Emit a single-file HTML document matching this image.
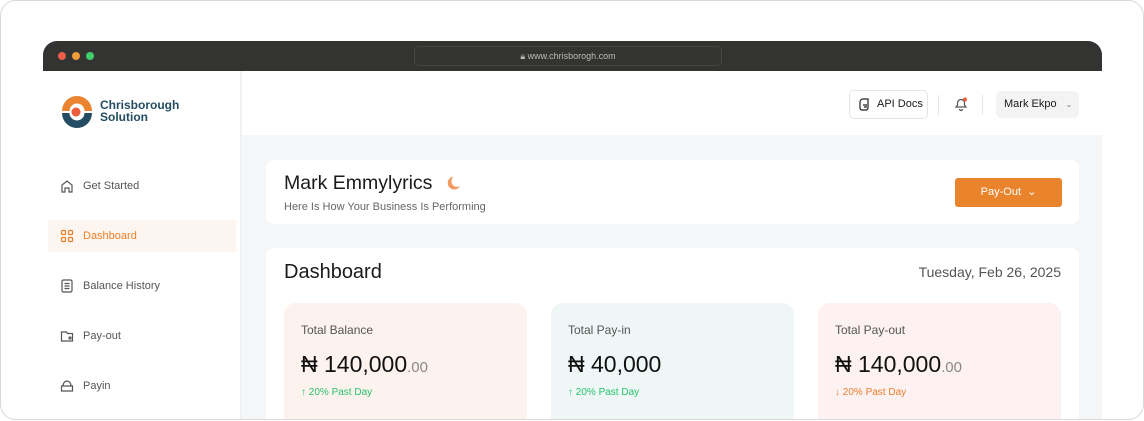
<!DOCTYPE html>
<html><head><meta charset="utf-8"><style>
*{box-sizing:border-box;margin:0;padding:0}
html,body{width:1144px;height:421px;overflow:hidden}
body{background:#fff;font-family:"Liberation Sans",sans-serif;position:relative;color:#1a1a1a}
.outer{position:absolute;left:0;top:0;width:1144px;height:420px;border:1px solid #d9d9d9;border-radius:16px}
.win{position:absolute;left:43px;top:41px;width:1059px;height:378px;border-radius:14px 14px 0 0;overflow:hidden;background:#f5f6f8}
.bar{height:30px;background:#333331;position:relative}
.dot{position:absolute;top:11px;width:8px;height:8px;border-radius:50%}
.url{position:absolute;left:371px;top:5px;width:308px;height:20px;border:1px solid #474745;border-radius:5px;color:#bbb;font-size:9px;text-align:center;line-height:18px}
.side{position:absolute;left:0;top:30px;width:198px;height:360px;background:#fff;border-right:1px solid #eee}
.nav{position:absolute;left:5px;width:188px;height:32px;display:flex;align-items:center;padding-left:12px;font-size:11px;color:#555}
.nav svg{margin-right:9px}
.head{position:absolute;left:199px;top:30px;right:0;height:64px;background:#fff}
.card{position:absolute;background:#fff;border-radius:8px}
.stat{position:absolute;top:262px;width:243px;height:140px;border-radius:12px;padding:20px 17px}
.stat .t{font-size:12px;color:#555}
.stat .v{font-size:23px;margin-top:14px;color:#111}
.stat .v small{font-size:15px;color:#888}
.stat .p{font-size:10px;margin-top:9px}
</style></head><body>
<div class="outer"></div>
<div class="win">
 <div class="bar">
  <div class="dot" style="left:15px;background:#ec5c4a"></div>
  <div class="dot" style="left:29px;background:#ef9d3a"></div>
  <div class="dot" style="left:43px;background:#3ecf6c"></div>
  <div class="url">🔒︎ www.chrisborogh.com</div>
 </div>
 <div class="side">
  <svg style="position:absolute;left:16px;top:24px" width="36" height="34" viewBox="0 0 36 34"><path d="M3 16 A15 15 0 0 1 33 16 L25.5 16 A7.5 7.5 0 0 0 10.5 16Z" fill="#eb8430"/><path d="M3 18 A15 15 0 0 0 33 18 L25.5 18 A7.5 7.5 0 0 1 10.5 18Z" fill="#244d63"/><circle cx="17" cy="17" r="4.5" fill="#ec5c3a"/></svg>
  <div style="position:absolute;left:57px;top:28px;font-weight:bold;font-size:12px;line-height:12px;color:#244d63">Chrisborough<br>Solution</div>
  <div class="nav" style="top:99px"><svg width="14" height="14" viewBox="0 0 14 14" fill="none" stroke="#555" stroke-width="1.2"><path d="M2 13V6l5-4 5 4v7H9V9H5v4Z"/></svg>Get Started</div>
  <div class="nav" style="top:149px;background:#fdf5ef;color:#ea7f2b"><svg width="14" height="14" viewBox="0 0 14 14" fill="none" stroke="#ea7f2b" stroke-width="1.2"><rect x="1.5" y="1.5" width="4" height="4" rx="1"/><rect x="8.5" y="1.5" width="4" height="4" rx="1"/><rect x="1.5" y="8.5" width="4" height="4" rx="1"/><rect x="8.5" y="8.5" width="4" height="4" rx="1"/></svg>Dashboard</div>
  <div class="nav" style="top:199px"><svg width="14" height="14" viewBox="0 0 14 14" fill="none" stroke="#555" stroke-width="1.2"><rect x="2" y="1" width="10" height="12" rx="1.5"/><path d="M4.5 4.5h5M4.5 7h5M4.5 9.5h5"/></svg>Balance History</div>
  <div class="nav" style="top:249px"><svg width="14" height="14" viewBox="0 0 14 14" fill="none" stroke="#555" stroke-width="1.2"><path d="M1.5 3h5l1 1.5h5v7.5h-11Z"/><circle cx="10" cy="9" r="1"/></svg>Pay-out</div>
  <div class="nav" style="top:299px"><svg width="14" height="14" viewBox="0 0 14 14" fill="none" stroke="#555" stroke-width="1.2"><path d="M1.5 7h11v5h-11Z M3 7c0-3 2-5 4-5s4 2 4 5"/></svg>Payin</div>
 </div>
 <div class="head">
  <div style="position:absolute;left:607px;top:19px;width:79px;height:29px;border:1px solid #e4e4e4;border-radius:5px;font-size:11px;line-height:27px;padding-left:27px">API Docs</div>
  <svg style="position:absolute;left:616px;top:27px" width="13" height="13" viewBox="0 0 13 13" fill="none" stroke="#222" stroke-width="1.2"><path d="M2 4a3 3 0 0 1 3-3h5v9a2 2 0 0 1-2 2H4a2 2 0 0 1-2-2Z M5 7h4M6 9h3"/></svg>
  <div style="position:absolute;left:696px;top:24px;width:1px;height:20px;background:#e5e5e5"></div>
  <svg style="position:absolute;left:711px;top:25px" width="16" height="16" viewBox="0 0 16 16" fill="none" stroke="#555" stroke-width="1.2"><path d="M3 11h10l-1.5-2V7a3.5 3.5 0 0 0-7 0v2Z M6.5 13a1.5 1.5 0 0 0 3 0"/><circle cx="12" cy="3.5" r="2" fill="#ec5c3a" stroke="none"/></svg>
  <div style="position:absolute;left:740px;top:24px;width:1px;height:20px;background:#e5e5e5"></div>
  <div style="position:absolute;left:754px;top:20px;width:83px;height:27px;background:#f3f3f3;border-radius:5px;font-size:11px;line-height:27px;padding-left:8px">Mark Ekpo <span style="font-size:8px;color:#777;margin-left:6px">⌄</span></div>
 </div>
 <div class="card" style="left:223px;top:119px;width:813px;height:64px">
  <div style="position:absolute;left:18px;top:12px;font-size:19.5px">Mark Emmylyrics</div>
  <svg style="position:absolute;left:179px;top:15px" width="16" height="16" viewBox="0 0 16 16"><path d="M9 1.5A6.5 6.5 0 1 0 15 11 5.5 5.5 0 0 1 9 1.5Z" fill="#f29a5e"/></svg>
  <div style="position:absolute;left:18px;top:41px;font-size:11px;color:#666">Here Is How Your Business Is Performing</div>
  <div style="position:absolute;left:689px;top:18px;width:107px;height:29px;background:#ea842c;border-radius:3px;color:#fff;font-size:11px;text-align:center;line-height:29px">Pay-Out &nbsp;⌄</div>
 </div>
 <div class="card" style="left:223px;top:207px;width:813px;height:220px">
  <div style="position:absolute;left:18px;top:13px;font-size:20px">Dashboard</div>
  <div style="position:absolute;right:18px;top:16px;font-size:14px;color:#555">Tuesday, Feb 26, 2025</div>
 </div>
 <div class="stat" style="left:241px;background:#fcf2ee"><div class="t">Total Balance</div><div class="v">₦ 140,000<small>.00</small></div><div class="p" style="color:#27c26b">↑ 20% Past Day</div></div>
 <div class="stat" style="left:508px;background:#eef6f6"><div class="t">Total Pay-in</div><div class="v">₦ 40,000</div><div class="p" style="color:#27c26b">↑ 20% Past Day</div></div>
 <div class="stat" style="left:775px;background:#fdf1f2"><div class="t">Total Pay-out</div><div class="v">₦ 140,000<small>.00</small></div><div class="p" style="color:#ea7f2b">↓ 20% Past Day</div></div>
</div>
</body></html>
